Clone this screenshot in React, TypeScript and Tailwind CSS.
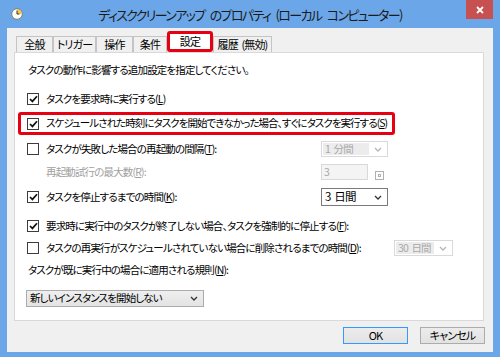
import { ReactNode } from "react";

const jp = "font-['Meiryo_UI','Noto_Sans_CJK_JP',sans-serif] [font-feature-settings:'palt'] [word-spacing:2px]";

function ClockIcon() {
  return (
    <svg width="12" height="12" viewBox="0 0 12 12">
      <circle cx="6" cy="6" r="5.3" fill="#fdfdf8" stroke="#7a7a6a" strokeWidth="0.9" />
      <path d="M6 6 L6 1.2 A4.8 4.8 0 0 1 10.8 6 Z" fill="#f2c94c" />
      <path d="M6 2.6 L6 6 L8.4 6" stroke="#333" strokeWidth="1" fill="none" />
    </svg>
  );
}

function CheckBox({ checked }: { checked: boolean }) {
  return (
    <span className="flex h-[12px] w-[12px] shrink-0 items-center justify-center border border-[#3c3c3c] bg-white">
      {checked && (
        <svg width="9" height="8" viewBox="0 0 9 8">
          <path d="M1 4 L3.4 6.4 L8 1.2" stroke="#111" strokeWidth="1.7" fill="none" />
        </svg>
      )}
    </span>
  );
}

function Chevron({ color }: { color: string }) {
  return (
    <svg width="8" height="5" viewBox="0 0 8 5">
      <path d="M1 1 L4 4 L7 1" stroke={color} strokeWidth="1.3" fill="none" />
    </svg>
  );
}

function Combo({ value, disabled, className }: { value: string; disabled?: boolean; className: string }) {
  return (
    <div
      className={
        disabled
          ? `flex shrink-0 items-center whitespace-nowrap border border-[#d9d9d9] bg-white p-[1px] ${className}`
          : `flex shrink-0 items-center whitespace-nowrap border border-[#7a7a7a] bg-white p-[1px] ${className}`
      }
    >
      <span
        className={
          disabled
            ? "flex h-full flex-1 items-center bg-[#ececec] pl-[2px] text-[#a8a8a8]"
            : "flex h-full flex-1 items-center pl-[2px] text-black"
        }
      >
        {value}
      </span>
      <span className="flex w-[17px] justify-center">
        <Chevron color={disabled ? "#b5b5b5" : "#333"} />
      </span>
    </div>
  );
}

function Label({ children, dim }: { children: ReactNode; dim?: boolean }) {
  return <span className={dim ? "whitespace-nowrap text-[#a0a0a0]" : "whitespace-nowrap text-black"}>{children}</span>;
}

function Tab({ label, w }: { label: string; w: string }) {
  return (
    <div className={`flex h-[16px] items-center justify-center whitespace-nowrap border border-b-0 border-[#c4c4c4] bg-[#f0f0f0] ${w}`}>
      {label}
    </div>
  );
}

export default function App() {
  return (
    <div className={`flex h-[357px] w-[500px] flex-col bg-[#6ba7e8] px-[7px] pb-[5px] text-[10.5px] leading-none tracking-[-0.85px] ${jp}`}>
      {/* Title bar */}
      <div className="grid h-[28px] shrink-0 grid-cols-[1fr_auto_1fr] items-center">
        <div className="pl-[4px]">
          <ClockIcon />
        </div>
        <div className="whitespace-nowrap text-[13px] tracking-[-1.65px] text-[#1b1b1b] [word-spacing:4px]">
          ディスククリーンアップ のプロパティ (ローカル コンピューター)
        </div>
        <div className="flex h-full justify-end">
          <div className="flex h-[19px] w-[27px] items-center justify-center bg-[#c75050]">
            <svg width="8" height="8" viewBox="0 0 8 8">
              <path d="M1 1 L7 7 M7 1 L1 7" stroke="#fff" strokeWidth="1.8" />
            </svg>
          </div>
        </div>
      </div>

      {/* Client area */}
      <div className="flex flex-1 flex-col bg-[#f0f0f0]">
        {/* Tabs */}
        <div className="flex h-[24px] items-end pl-[9px] text-[11px]">
          <Tab label="全般" w="w-[37px]" />
          <Tab label="トリガー" w="w-[43px]" />
          <Tab label="操作" w="w-[37px]" />
          <Tab label="条件" w="w-[34px]" />
          <div className="flex h-[21px] w-[46px] items-end rounded-[3px] border-[3px] border-[#e60012] bg-white">
            <div className="flex h-full w-full items-center justify-center bg-white">設定</div>
          </div>
          <Tab label="履歴 (無効)" w="w-[59px]" />
        </div>

        {/* Panel */}
        <div className="ml-[7px] h-[269px] w-[470px] border border-[#d9d9d9] bg-white pt-[9px]">
          <div className="flex h-[16px] items-center pl-[13px]">
            <Label>タスクの動作に影響する追加設定を指定してください。</Label>
          </div>

          <div className="mt-[13px] flex h-[16px] items-center gap-[7px] pl-[12px]">
            <CheckBox checked />
            <Label>
              タスクを要求時に実行する(<u>L</u>)
            </Label>
          </div>

          <div className="ml-[3px] mt-[5px] flex h-[23px] w-[377px] items-center gap-[7px] rounded-[3px] border-[3px] border-[#e60012] pl-[6px] tracking-[-0.95px]">
            <CheckBox checked />
            <Label>
              スケジュールされた時刻にタスクを開始できなかった場合、すぐにタスクを実行する(<u>S</u>)
            </Label>
          </div>

          <div className="mt-[6px] flex h-[16px] items-center pl-[12px]">
            <div className="flex w-[294px] items-center gap-[7px]">
              <CheckBox checked={false} />
              <Label>
                タスクが失敗した場合の再起動の間隔(<u>T</u>):
              </Label>
            </div>
            <Combo value="1 分間" disabled className="h-[16px] w-[67px]" />
          </div>

          <div className="mt-[7px] flex h-[16px] items-center pl-[31px]">
            <div className="w-[275px]">
              <Label dim>
                再起動試行の最大数(<u>R</u>):
              </Label>
            </div>
            <div className="flex h-[16px] w-[47px] items-center border border-[#d9d9d9] bg-[#f4f4f4] pl-[2px] text-[#a8a8a8]">3</div>
            <div className="ml-[7px] mt-[6px] flex h-[9px] w-[9px] items-center justify-center border border-[#b0b0b0]">
              <span className="h-[3px] w-[3px] border border-[#b0b0b0]" />
            </div>
          </div>

          <div className="mt-[8px] flex h-[18px] items-center pl-[12px]">
            <div className="flex w-[294px] items-center gap-[7px]">
              <CheckBox checked />
              <Label>
                タスクを停止するまでの時間(<u>K</u>):
              </Label>
            </div>
            <Combo value="3 日間" className="h-[18px] w-[67px] text-[11.5px]" />
          </div>

          <div className="mt-[12px] flex h-[16px] items-center gap-[7px] pl-[12px]">
            <CheckBox checked />
            <Label>
              要求時に実行中のタスクが終了しない場合、タスクを強制的に停止する(<u>F</u>):
            </Label>
          </div>

          <div className="mt-[6px] flex h-[16px] items-center pl-[12px]">
            <div className="flex w-[367px] items-center gap-[7px]">
              <CheckBox checked={false} />
              <Label>
                タスクの再実行がスケジュールされていない場合に削除されるまでの時間(<u>D</u>):
              </Label>
            </div>
            <Combo value="30 日間" disabled className="h-[16px] w-[59px]" />
          </div>

          <div className="mt-[6px] flex h-[16px] items-center pl-[13px]">
            <Label>
              タスクが既に実行中の場合に適用される規則(<u>N</u>):
            </Label>
          </div>

          <div className="ml-[11px] mt-[12px] flex h-[17px] w-[178px] items-center whitespace-nowrap border border-[#acacac] bg-gradient-to-b from-[#efefef] to-[#e3e3e3] pl-[3px]">
            <span className="flex-1">新しいインスタンスを開始しない</span>
            <span className="flex w-[18px] justify-center">
              <Chevron color="#333" />
            </span>
          </div>
        </div>

        {/* Buttons */}
        <div className="mt-[6px] flex justify-end gap-[12px] pr-[8px]">
          <button className="flex h-[17px] w-[65px] items-center justify-center border border-[#3399ff] bg-gradient-to-b from-[#ececec] to-[#e2e2e2] text-[11px] text-black">
            OK
          </button>
          <button className="flex h-[17px] w-[65px] items-center justify-center border border-[#acacac] bg-gradient-to-b from-[#ececec] to-[#e2e2e2] text-[11px] text-black">
            キャンセル
          </button>
        </div>
      </div>
    </div>
  );
}
